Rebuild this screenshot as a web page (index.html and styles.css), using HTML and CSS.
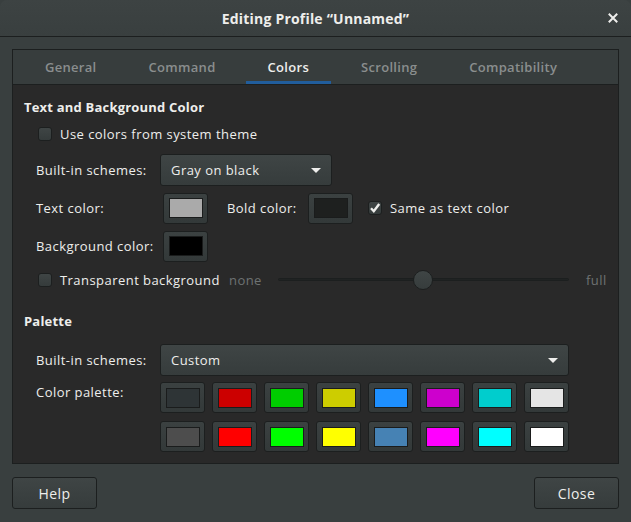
FILE: index.html
```html
<!DOCTYPE html>
<html>
<head>
<meta charset="utf-8">
<link rel="stylesheet" href="styles.css">
</head>
<body>
<div class="window">
  <div class="titlebar">
    <div></div>
    <div class="title">Editing Profile “Unnamed”</div>
    <div class="tb-right">
      <svg class="close-x" width="10" height="10" viewBox="0 0 10 10"><path d="M1.5 1.5 L8.5 8.5 M8.5 1.5 L1.5 8.5" stroke="#eeeeec" stroke-width="2" stroke-linecap="square"/></svg>
    </div>
  </div>
  <div class="main">
    <div class="notebook">
      <div class="tabs">
        <div class="tab">General</div>
        <div class="tab">Command</div>
        <div class="tab active">Colors</div>
        <div class="tab">Scrolling</div>
        <div class="tab">Compatibility</div>
      </div>
      <div class="page">
        <div class="heading h1">Text and Background Color</div>
        <div class="row check-row r-sys">
          <span class="checkbox"></span><span>Use colors from system theme</span>
        </div>
        <div class="row r-scheme">
          <span class="label">Built-in schemes:</span>
          <div class="combo combo-small"><span>Gray on black</span><span class="arrow"></span></div>
        </div>
        <div class="row r-text">
          <span class="label lbl-text">Text color:</span>
          <div class="swatch"><span class="inner" style="background:#aaaaaa"></span></div>
          <span class="label lbl-bold">Bold color:</span>
          <div class="swatch"><span class="inner" style="background:#1e201f"></span></div>
          <span class="checkbox checked"><svg width="12" height="12" viewBox="0 0 12 12"><path d="M2 6.2 L4.8 9.2 L10.2 2" fill="none" stroke="#eeeeec" stroke-width="2.4"/></svg></span>
          <span class="same">Same as text color</span>
        </div>
        <div class="row r-bg">
          <span class="label lbl-text">Background color:</span>
          <div class="swatch"><span class="inner" style="background:#000000"></span></div>
        </div>
        <div class="row check-row r-trans">
          <span class="checkbox"></span><span class="trans-lbl">Transparent background</span>
          <span class="dim none">none</span>
          <div class="slider"><div class="track"></div><div class="knob"></div></div>
          <span class="dim full">full</span>
        </div>
        <div class="heading h2">Palette</div>
        <div class="row r-scheme2">
          <span class="label">Built-in schemes:</span>
          <div class="combo combo-wide"><span>Custom</span><span class="arrow"></span></div>
        </div>
        <div class="palette-row">
          <span class="label pal-label">Color palette:</span>
          <div class="palette">
            <div class="swatch"><span class="inner" style="background:#2e3436"></span></div>
            <div class="swatch"><span class="inner" style="background:#cc0000"></span></div>
            <div class="swatch"><span class="inner" style="background:#00cd00"></span></div>
            <div class="swatch"><span class="inner" style="background:#cdcd00"></span></div>
            <div class="swatch"><span class="inner" style="background:#1e90ff"></span></div>
            <div class="swatch"><span class="inner" style="background:#cd00cd"></span></div>
            <div class="swatch"><span class="inner" style="background:#00cdcd"></span></div>
            <div class="swatch"><span class="inner" style="background:#e5e5e5"></span></div>
            <div class="swatch"><span class="inner" style="background:#4d4d4d"></span></div>
            <div class="swatch"><span class="inner" style="background:#ff0000"></span></div>
            <div class="swatch"><span class="inner" style="background:#00ff00"></span></div>
            <div class="swatch"><span class="inner" style="background:#ffff00"></span></div>
            <div class="swatch"><span class="inner" style="background:#4682b4"></span></div>
            <div class="swatch"><span class="inner" style="background:#ff00ff"></span></div>
            <div class="swatch"><span class="inner" style="background:#00ffff"></span></div>
            <div class="swatch"><span class="inner" style="background:#ffffff"></span></div>
          </div>
        </div>
      </div>
    </div>
    <div class="actions">
      <div class="button">Help</div>
      <div class="button">Close</div>
    </div>
  </div>
</div>
</body>
</html>
```

FILE: styles.css
```css
html, body {
  margin: 0;
  padding: 0;
  background: #393f3f;
}
body {
  font-family: "Open Sans", "DejaVu Sans", sans-serif;
  font-size: 13px;
  letter-spacing: 0.45px;
  color: #eeeeec;
}
.window {
  width: 631px;
  height: 522px;
  background: #393f3f;
  overflow: hidden;
}
.titlebar {
  height: 36px;
  display: grid;
  grid-template-columns: 1fr auto 1fr;
  align-items: center;
  background: linear-gradient(#3d4343, #393f3f);
  border-bottom: 1px solid #1c1f1f;
  border-radius: 7px 7px 0 0;
}
.title {
  font-weight: bold;
  font-size: 14px;
  letter-spacing: 0.2px;
  color: #eeeeec;
}
.tb-right {
  display: flex;
  justify-content: flex-end;
  padding-right: 13px;
}
.close-x { display: block; }
.main {
  padding: 12px 12px 0 12px;
}
.notebook {
  height: 413px;
  border: 1px solid #1c1f1f;
  background: #292929;
  display: flex;
  flex-direction: column;
}
.tabs {
  height: 34px;
  background: #373d3d;
  border-bottom: 1px solid #1c1f1f;
  display: flex;
  padding-left: 10px;
  gap: 8px;
}
.tab {
  padding: 0 22px;
  display: flex;
  align-items: center;
  font-weight: 600;
  letter-spacing: 0.3px;
  color: #8a8e8e;
  border-bottom: 3px solid transparent;
  padding-top: 3px;
}
.tab.active {
  color: #eeeeec;
  border-bottom-color: #215d9c;
}
.page {
  flex: 1;
  padding-left: 11px;
  padding-top: 14px;
}
.heading {
  font-weight: bold;
  letter-spacing: 0.2px;
  height: 16px;
  line-height: 16px;
}
.row {
  display: flex;
  align-items: center;
  padding-left: 12px;
}
.label { white-space: nowrap; }
.r-sys { margin-top: 10px; height: 18px; padding-left: 14px; }
.checkbox {
  width: 12px;
  height: 12px;
  border: 1px solid #1c1f1f;
  border-radius: 3px;
  background: linear-gradient(#3f4545, #353b3b);
  margin-right: 8px;
  display: inline-flex;
  align-items: center;
  justify-content: center;
  flex: none;
}
.r-scheme { margin-top: 11px; height: 32px; }
.r-scheme .label, .r-scheme2 .label { width: 124px; }
.combo {
  height: 30px;
  border: 1px solid #1c1f1f;
  border-radius: 3px;
  background: linear-gradient(#3f4545, #363c3c);
  display: flex;
  align-items: center;
  justify-content: space-between;
  padding: 0 10px;
  box-sizing: content-box;
}
.combo-small { width: 150px; }
.combo-wide { width: 387px; }
.arrow {
  width: 0;
  height: 0;
  border-left: 5px solid transparent;
  border-right: 5px solid transparent;
  border-top: 5px solid #eeeeec;
}
.r-text { margin-top: 7px; height: 30px; }
.lbl-text { width: 127px; }
.lbl-bold { margin-left: 19px; width: 81px; }
.swatch {
  width: 43px;
  height: 29px;
  border: 1px solid #1c1f1f;
  border-radius: 3px;
  background: linear-gradient(#3b4141, #333939);
  display: flex;
  align-items: center;
  justify-content: center;
  box-sizing: content-box;
  flex: none;
}
.inner {
  width: 32px;
  height: 18px;
  border: 1px solid #1a1c1c;
  display: block;
}
.checked { margin-left: 15px; }
.r-bg { margin-top: 8px; height: 30px; }
.r-trans { margin-top: 9px; height: 20px; padding-left: 14px; }
.trans-lbl { width: 169px; white-space: nowrap; }
.dim { color: #6e7272; }
.none { width: 49px; }
.slider {
  position: relative;
  width: 291px;
  height: 20px;
  margin-right: 17px;
}
.track {
  position: absolute;
  left: 0;
  right: 0;
  top: 8px;
  height: 3px;
  background: #202323;
  border: 1px solid #1c1f1f;
  border-radius: 2px;
  box-sizing: border-box;
}
.knob {
  position: absolute;
  left: 135px;
  top: 0;
  width: 18px;
  height: 18px;
  border-radius: 50%;
  border: 1px solid #1c1f1f;
  background: linear-gradient(#3f4545, #363c3c);
}
.h2 { margin-top: 23px; }
.r-scheme2 { margin-top: 15px; height: 32px; }
.palette-row {
  display: flex;
  padding-left: 12px;
  margin-top: 6px;
}
.pal-label { width: 124px; line-height: 20px; }
.palette {
  display: grid;
  grid-template-columns: repeat(8, 45px);
  column-gap: 7px;
  row-gap: 8px;
}
.actions {
  display: flex;
  justify-content: space-between;
  margin-top: 13px;
}
.button {
  width: 83px;
  height: 30px;
  border: 1px solid #1c1f1f;
  border-radius: 3px;
  background: linear-gradient(#3f4545, #363c3c);
  display: flex;
  align-items: center;
  justify-content: center;
  font-size: 14px;
}
```
